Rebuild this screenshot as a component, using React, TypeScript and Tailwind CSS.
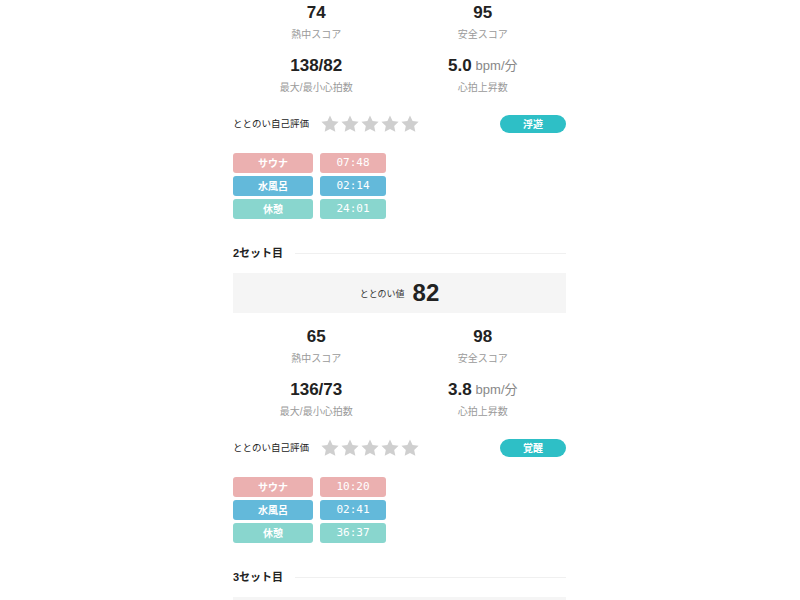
const sets = [
  {
    title: "1セット目",
    total: 80,
    heat: "74",
    safe: "95",
    hr: "138/82",
    rise: "5.0",
    mood: "浮遊",
    times: ["07:48", "02:14", "24:01"],
  },
  {
    title: "2セット目",
    total: 82,
    heat: "65",
    safe: "98",
    hr: "136/73",
    rise: "3.8",
    mood: "覚醒",
    times: ["10:20", "02:41", "36:37"],
  },
  {
    title: "3セット目",
    total: 79,
    heat: "70",
    safe: "96",
    hr: "134/75",
    rise: "4.2",
    mood: "浮遊",
    times: ["09:12", "01:58", "20:10"],
  },
];

const steps = [
  { label: "サウナ", color: "bg-[#ebb0b0]" },
  { label: "水風呂", color: "bg-[#63b9da]" },
  { label: "休憩", color: "bg-[#89d6ce]" },
];

function Star() {
  return (
    <svg className="w-5 h-5" viewBox="0 0 24 24">
      <path
        fill="#cfcfcf"
        d="M12 1.8l3.1 6.6 7.2.9-5.3 5 1.4 7.1L12 17.9l-6.4 3.5 1.4-7.1-5.3-5 7.2-.9z"
      />
    </svg>
  );
}

function Score({ value, unit, label }: { value: string; unit?: string; label: string }) {
  return (
    <div className="flex flex-col items-center">
      <div className="h-6 flex items-center pt-0.5">
        <span className="text-[17px] font-bold text-[#222]">{value}</span>
        {unit && <span className="ml-1 text-[13px] text-[#888]">{unit}</span>}
      </div>
      <div className="mt-0.5 h-4 flex items-center text-[10px] text-[#9a9a9a]">{label}</div>
    </div>
  );
}

function SetBlock({ set }: { set: (typeof sets)[0] }) {
  return (
    <section className="pb-[26px]">
      <div className="flex items-center gap-3 h-4">
        <span className="text-[11px] font-bold text-[#222]">{set.title}</span>
        <div className="flex-1 h-px bg-[#f0f0f0]" />
      </div>

      <div className="mt-3 h-10 bg-[#f5f5f5] flex items-center justify-center gap-2">
        <span className="text-[9px] text-[#333] pt-1">ととのい値</span>
        <span className="text-[24px] font-bold text-[#222]">{set.total}</span>
      </div>

      <div className="mt-[11px] grid grid-cols-2">
        <Score value={set.heat} label="熱中スコア" />
        <Score value={set.safe} label="安全スコア" />
      </div>
      <div className="mt-[11px] grid grid-cols-2">
        <Score value={set.hr} label="最大/最小心拍数" />
        <Score value={set.rise} unit="bpm/分" label="心拍上昇数" />
      </div>

      <div className="mt-5 h-[18px] flex items-center">
        <span className="w-[87px] text-[9.5px] text-[#222]">ととのい自己評価</span>
        <div className="flex">
          <Star />
          <Star />
          <Star />
          <Star />
          <Star />
        </div>
        <span className="ml-auto w-[66px] h-[18px] rounded-full bg-[#2ebfc6] text-white text-[10px] font-bold flex items-center justify-center">
          {set.mood}
        </span>
      </div>

      <div className="mt-5 flex flex-col gap-[3px]">
        {steps.map((step, i) => (
          <div key={step.label} className="flex gap-[7px]">
            <div
              className={`w-20 h-5 rounded-[3px] ${step.color} text-white text-[10px] font-bold flex items-center justify-center`}
            >
              {step.label}
            </div>
            <div
              className={`w-[66px] h-5 rounded-[3px] ${step.color} text-white text-[11px] flex items-center justify-center font-['DejaVu_Sans_Mono',monospace]`}
            >
              {set.times[i]}
            </div>
          </div>
        ))}
      </div>
    </section>
  );
}

export default function App() {
  return (
    <div className="w-[800px] h-[600px] overflow-hidden bg-white font-['Liberation_Sans','Noto_Sans_CJK_JP',sans-serif]">
      <div className="w-[333px] ml-[233px] -mt-[79px]">
        {sets.map((set) => (
          <SetBlock key={set.title} set={set} />
        ))}
      </div>
    </div>
  );
}
